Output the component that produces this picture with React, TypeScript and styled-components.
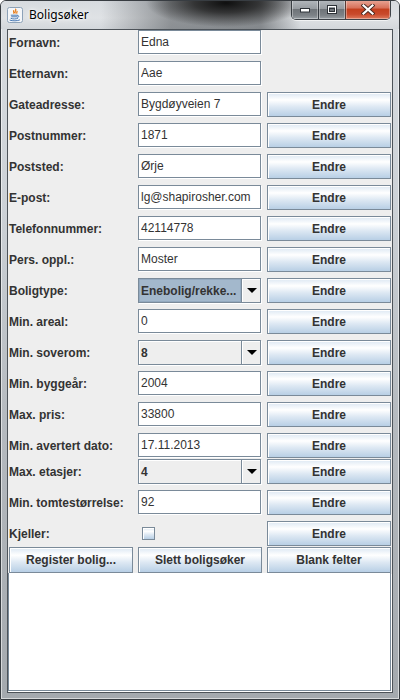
import React from 'react';
import styled, { createGlobalStyle } from 'styled-components';

// Global
const Global = createGlobalStyle`
  html, body {
    margin: 0;
    padding: 0;
    background: #ffffff;
    overflow: hidden;
  }
  * {
    box-sizing: border-box;
  }
`;

// Window chrome
const Window = styled.div`
  width: 400px;
  height: 700px;
  display: flex;
  flex-direction: column;
  border: 1px solid #383d42;
  border-radius: 6px 6px 0 0;
  background: linear-gradient(to bottom, #d9dde1 0, #ccd1d6 30%, #b5babf 60%, #a4a9ae 100%);
  box-shadow: inset 0 0 0 1px rgba(255, 255, 255, 0.55);
  overflow: hidden;
`;

const TitleBar = styled.div`
  height: 28px;
  display: flex;
  align-items: flex-start;
  padding: 0 8px 0 6px;
  background:
    radial-gradient(ellipse 80px 24px at 225px 2px, rgba(8, 8, 8, 0.95) 0%, rgba(30, 30, 30, 0.8) 40%, rgba(90, 94, 98, 0) 100%),
    linear-gradient(to right, rgba(255,255,255,0) 0, rgba(255,255,255,0) 100px, rgba(80,84,88,0.55) 170px, rgba(80,84,88,0.6) 260px, rgba(255,255,255,0) 300px),
    linear-gradient(to bottom, #d7dbdf 0, #dfe2e5 60%, #d3d7db 100%);
`;

const AppIcon = styled.svg`
  margin-top: 6px;
  flex: none;
`;

const Title = styled.div`
  margin: 7px 0 0 6px;
  font-family: 'Noto Sans', 'DejaVu Sans', sans-serif;
  font-size: 12px;
  line-height: 14px;
  color: #000;
  text-shadow: 0 0 6px #fff, 0 0 3px #fff;
  flex: 1;
`;

const Controls = styled.div`
  display: flex;
  height: 20px;
  margin-top: -1px;
  border: 1px solid rgba(45, 50, 56, 0.9);
  border-top: none;
  border-radius: 0 0 5px 5px;
  overflow: hidden;
  box-shadow: 0 1px 0 rgba(255, 255, 255, 0.6);
`;

const CtrlBtn = styled.div<{ $w: number; $close?: boolean }>`
  width: ${p => p.$w}px;
  display: flex;
  align-items: center;
  justify-content: center;
  box-shadow: inset 0 0 0 1px rgba(255, 255, 255, 0.35);
  border-left: ${p => (p.$close ? '1px solid #5a3a33' : '1px solid rgba(45,50,56,0.9)')};
  background: ${p =>
    p.$close
      ? 'linear-gradient(to bottom, #e9a898 0%, #d8735c 40%, #c4401f 50%, #c94a2c 75%, #de7a5e 100%)'
      : 'linear-gradient(to bottom, #b4b9be 0%, #979ca1 45%, #6f7479 50%, #7c8186 80%, #9aa0a5 100%)'};
  &:first-child {
    border-left: none;
  }
`;

// Client area
const Body = styled.div`
  flex: 1;
  display: flex;
  padding: 0 6px 6px;
`;

const Client = styled.div`
  flex: 1;
  display: flex;
  flex-direction: column;
  border: 1px solid #4d5359;
  background: #eeeeee;
  font-family: 'Liberation Sans', Arial, sans-serif;
  font-size: 12px;
  color: #333333;
`;

const Row = styled.div<{ $gap: number; $h?: number }>`
  display: grid;
  grid-template-columns: 124px 124px 124px;
  column-gap: 5px;
  height: ${p => p.$h || 25}px;
  margin-top: ${p => p.$gap}px;
  padding-left: 1px;
  flex: none;
`;

const Label = styled.div`
  display: flex;
  align-items: center;
  font-weight: bold;
  white-space: nowrap;
`;

const Field = styled.input`
  width: 123px;
  height: 24px;
  margin: 0;
  padding: 0 0 0 2px;
  border: 1px solid #7a8a99;
  box-shadow: 1px 1px 0 #ffffff;
  background: #ffffff;
  font-family: 'Liberation Sans', Arial, sans-serif;
  font-size: 12px;
  color: #333333;
  outline: none;
`;

const Button = styled.div`
  display: flex;
  align-items: center;
  justify-content: center;
  border: 1px solid #7a8a99;
  box-shadow: inset 1px 1px 0 #ffffff;
  background: linear-gradient(to bottom, #dde8f3 0%, #ffffff 30%, #dde8f3 60%, #b8cfe5 100%);
  font-weight: bold;
  color: #333333;
  white-space: nowrap;
`;

const Combo = styled.div`
  width: 123px;
  height: 25px;
  display: flex;
  border: 1px solid #7a8a99;
  box-shadow: 1px 1px 0 #ffffff;
  background: #eeeeee;
`;

const ComboValue = styled.div<{ $focused?: boolean }>`
  flex: 1;
  display: flex;
  align-items: center;
  padding-left: 2px;
  font-weight: bold;
  background: ${p => (p.$focused ? '#a3b8cc' : '#eeeeee')};
  box-shadow: ${p => (p.$focused ? 'inset 0 0 0 1px #93a9bf' : 'inset 1px 1px 0 #ffffff')};
  white-space: nowrap;
  overflow: hidden;
`;

const ComboArrow = styled.div`
  width: 19px;
  display: flex;
  align-items: center;
  justify-content: center;
  border-left: 1px solid #7a8a99;
  box-shadow: inset 1px 1px 0 #ffffff;
  &::after {
    content: '';
    border-left: 5px solid transparent;
    border-right: 5px solid transparent;
    border-top: 5px solid #000000;
    margin-left: 1px;
  }
`;

const CheckCell = styled.div`
  display: flex;
  align-items: center;
  padding-left: 4px;
`;

const CheckBox = styled.div`
  width: 13px;
  height: 13px;
  border: 1px solid #7a8a99;
  box-shadow: inset 1px 1px 0 #ffffff;
  background: linear-gradient(to bottom, #dde8f3 0%, #ffffff 30%, #dde8f3 60%, #b8cfe5 100%);
`;

const TextArea = styled.div`
  flex: 1;
  margin-right: 1px;
  margin-bottom: 1px;
  border: 1px solid #7a8a99;
  border-top: none;
  box-shadow: 1px 1px 0 #ffffff;
  background: #ffffff;
`;

type RowData = {
  label: string;
  kind: 'text' | 'combo' | 'check';
  value?: string;
  button?: boolean;
  focused?: boolean;
  gap?: number;
};

const rows: RowData[] = [
  { label: 'Fornavn:', kind: 'text', value: 'Edna', gap: 0 },
  { label: 'Etternavn:', kind: 'text', value: 'Aae' },
  { label: 'Gateadresse:', kind: 'text', value: 'Bygdøyveien 7', button: true },
  { label: 'Postnummer:', kind: 'text', value: '1871', button: true },
  { label: 'Poststed:', kind: 'text', value: 'Ørje', button: true },
  { label: 'E-post:', kind: 'text', value: 'lg@shapirosher.com', button: true },
  { label: 'Telefonnummer:', kind: 'text', value: '42114778', button: true },
  { label: 'Pers. oppl.:', kind: 'text', value: 'Moster', button: true },
  { label: 'Boligtype:', kind: 'combo', value: 'Enebolig/rekke...', button: true, focused: true },
  { label: 'Min. areal:', kind: 'text', value: '0', button: true },
  { label: 'Min. soverom:', kind: 'combo', value: '8', button: true },
  { label: 'Min. byggeår:', kind: 'text', value: '2004', button: true },
  { label: 'Max. pris:', kind: 'text', value: '33800', button: true },
  { label: 'Min. avertert dato:', kind: 'text', value: '17.11.2013', button: true },
  { label: 'Max. etasjer:', kind: 'combo', value: '4', button: true, gap: 1 },
  { label: 'Min. tomtestørrelse:', kind: 'text', value: '92', button: true },
  { label: 'Kjeller:', kind: 'check', button: true },
];

function JavaIcon() {
  return (
    <AppIcon width="16" height="16" viewBox="0 0 16 16">
      <rect x="0.5" y="0.5" width="15" height="15" rx="2" fill="#f4f6f9" stroke="#8da2b8" />
      <path d="M8.6 2.2c1.4 1.3-1.6 2.2-0.4 3.8M6.8 3.6c-0.8 1 0.6 1.6 0 2.6M10 4.2c0.4 0.8-0.6 1.3-0.2 2" stroke="#e76f00" strokeWidth="1.1" fill="none" strokeLinecap="round" />
      <path d="M4.2 8.2h6.2M4.6 9.8h5.4M4 11.4c1.6 0.8 5.2 0.8 6.6 0M3 13.2c2.6 0.9 7.4 0.9 9.6-0.2M10.6 8.6c1.6-0.4 1.8 1.4 0.2 1.8" stroke="#4b7bb5" strokeWidth="1" fill="none" strokeLinecap="round" />
    </AppIcon>
  );
}

function Field1({ r }: { r: RowData }) {
  if (r.kind === 'combo') {
    return (
      <Combo>
        <ComboValue $focused={r.focused}>{r.value}</ComboValue>
        <ComboArrow />
      </Combo>
    );
  }
  if (r.kind === 'check') {
    return (
      <CheckCell>
        <CheckBox />
      </CheckCell>
    );
  }
  return <Field readOnly value={r.value} />;
}

export default function App() {
  return (
    <>
      <Global />
      <Window>
        <TitleBar>
          <JavaIcon />
          <Title>Boligsøker</Title>
          <Controls>
            <CtrlBtn $w={26}>
              <svg width="12" height="6" viewBox="0 0 12 6">
                <rect x="1.5" y="1.5" width="9" height="3.5" fill="#ffffff" stroke="#2d3238" />
              </svg>
            </CtrlBtn>
            <CtrlBtn $w={27}>
              <svg width="12" height="10" viewBox="0 0 12 10">
                <rect x="1.5" y="0.5" width="9" height="8" fill="none" stroke="#2d3238" />
                <rect x="2.5" y="1.5" width="7" height="6" fill="none" stroke="#ffffff" />
                <rect x="3.5" y="3.5" width="5" height="3" fill="none" stroke="#2d3238" />
              </svg>
            </CtrlBtn>
            <CtrlBtn $w={45} $close>
              <svg width="14" height="11" viewBox="0 0 14 11">
                <path d="M2.5 1.5 L11.5 9.5 M11.5 1.5 L2.5 9.5" stroke="#4a2a22" strokeWidth="4" strokeLinecap="square" />
                <path d="M2.5 1.5 L11.5 9.5 M11.5 1.5 L2.5 9.5" stroke="#ffffff" strokeWidth="2.2" strokeLinecap="square" />
              </svg>
            </CtrlBtn>
          </Controls>
        </TitleBar>
        <Body>
          <Client>
            {rows.map(r => (
              <Row key={r.label} $gap={r.gap === undefined ? 6 : r.gap}>
                <Label>{r.label}</Label>
                <Field1 r={r} />
                {r.button ? <Button>Endre</Button> : <div />}
              </Row>
            ))}
            <Row $gap={1} $h={26}>
              <Button>Register bolig...</Button>
              <Button>Slett boligsøker</Button>
              <Button>Blank felter</Button>
            </Row>
            <TextArea />
          </Client>
        </Body>
      </Window>
    </>
  );
}
